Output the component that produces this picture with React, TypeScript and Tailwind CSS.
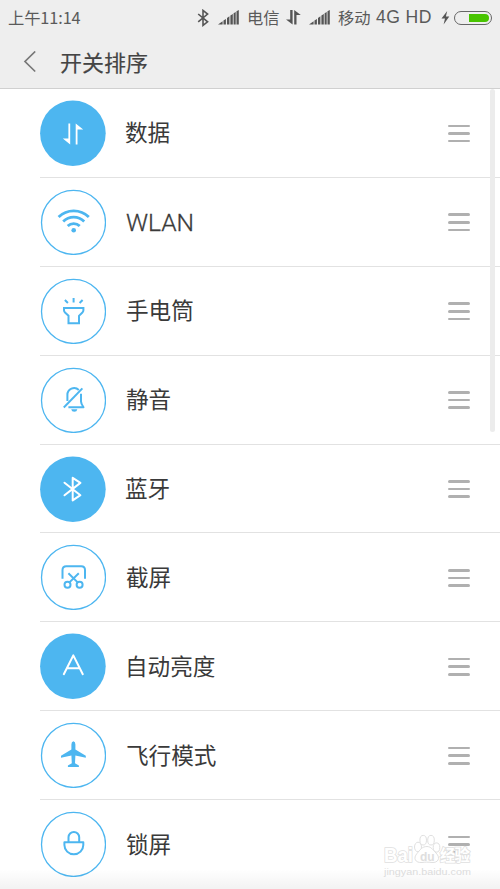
import type { ReactNode } from 'react'

const DataIcon = () => (
  <g fill="currentColor">
    <path d="M28.4 23.6H30.2V44.4L22.8 38.6H28.4Z" />
    <path d="M35.7 44.4V23.6L43.2 29.4H37.5V44.4Z" />
  </g>
)

const WlanIcon = () => (
  <>
    <g strokeWidth="2.8" strokeLinecap="butt">
      <path d="M18.6 28A21.5 21.5 0 0 1 48.8 28" />
      <path d="M23.2 32.5A15 15 0 0 1 44.2 32.5" />
      <path d="M27.7 37A8.6 8.6 0 0 1 39.7 37" />
    </g>
    <circle cx="33.7" cy="41.2" r="2.3" fill="currentColor" stroke="none" />
  </>
)

const TorchIcon = () => (
  <g strokeWidth="2" strokeLinecap="butt" strokeLinejoin="miter">
    <path d="M24 30H43.4V32.3Q43.4 33.6 42.4 34.5L39 37.8V45.2H28.5V37.8L25 34.5Q24 33.6 24 32.3Z" />
    <path d="M33.6 19.9V24.6M24.9 22L27.9 25M42.6 22L39.6 25" />
  </g>
)

const MuteIcon = () => (
  <g strokeWidth="2" strokeLinecap="butt">
    <path d="M23.8 40.5L42.4 21.4" />
    <path d="M27.4 34V28A6.7 6.7 0 0 1 38.8 23" />
    <path d="M41 26.8V34.5Q41 36.6 43.5 40.2H28.4" />
    <path d="M31.2 42.2H37.4Q36.9 44.8 34.3 44.8T31.2 42.2Z" fill="currentColor" stroke="none" />
  </g>
)

const BluetoothIcon = () => (
  <path d="M24.5 26.7L40.4 39.2L32.7 44.4V21.8L40.4 26.9L24.5 39.3" strokeWidth="2" />
)

const ScreenshotIcon = () => (
  <g strokeWidth="2" strokeLinecap="butt">
    <path d="M22.5 34.8V26Q22.5 22.2 26.3 22.2H41.2Q45 22.2 45 26V34.8" />
    <path d="M28.4 29.2L37.7 38.4M38.8 29.2L29.4 38.4" />
    <circle cx="27.5" cy="40.7" r="3" />
    <circle cx="39.6" cy="40.7" r="3" />
  </g>
)

const AutoIcon = () => (
  <path d="M23.8 41.2L33.3 22.4L42.8 41.2M26.9 35.3H39.7" strokeWidth="2" />
)

const PlaneIcon = () => (
  <path
    d="M33.4 19.2Q35.4 19.8 35.4 22.5V27.5L45.8 33.8V35.8L35.4 33.4L35 41.3L38.9 43.6V45H27.9V43.6L31.8 41.3L31.4 33.4L21 35.8V33.8L31.4 27.5V22.5Q31.4 19.8 33.4 19.2Z"
    fill="currentColor"
    stroke="none"
  />
)

const LockIcon = () => (
  <g strokeWidth="2">
    <path d="M28.5 31V26.3A5.3 5.3 0 0 1 39.2 26.3V31" />
    <path d="M24.4 31.2H43.3V34A9.4 9.3 0 0 1 24.4 34Z" />
  </g>
)

const toggles: { label: string; icon: ReactNode; on?: boolean }[] = [
  { label: '数据', icon: <DataIcon />, on: true },
  { label: 'WLAN', icon: <WlanIcon /> },
  { label: '手电筒', icon: <TorchIcon /> },
  { label: '静音', icon: <MuteIcon /> },
  { label: '蓝牙', icon: <BluetoothIcon />, on: true },
  { label: '截屏', icon: <ScreenshotIcon /> },
  { label: '自动亮度', icon: <AutoIcon />, on: true },
  { label: '飞行模式', icon: <PlaneIcon /> },
  { label: '锁屏', icon: <LockIcon /> },
]

function Signal() {
  return (
    <svg className="h-[15px] w-[21px] shrink-0" viewBox="0 0 21 15" fill="#555">
      <path d="M0 14.4L4.6 11.2V14.4ZM5.5 10.5L7.9 8.9V14.4H5.5ZM9 8L11.4 6.3V14.4H9ZM12.4 5.6L14.8 3.9V14.4H12.4ZM15.6 3.3L17.7 1.9V14.4H15.6ZM18.5 1.2L20.8 0V14.4H18.5Z" />
    </svg>
  )
}

function StatusBar() {
  return (
    <div className="flex h-[35px] items-center pl-[8px] text-[16.3px] leading-none whitespace-nowrap text-[#5a5a5a]">
      <span className="w-[189px] tracking-[-0.1px]">上午11:14</span>
      <svg className="h-[18px] w-[12px] shrink-0" viewBox="0 0 12 18" fill="none" stroke="#555" strokeWidth="1.6">
        <path d="M1.2 5L10.6 12.8L6 16.4V1.4L10.6 5L1.2 12.8" />
      </svg>
      <div className="ml-[9px] flex">
        <Signal />
      </div>
      <span className="ml-[8px] w-[32px]">电信</span>
      <svg className="ml-[7px] h-[15px] w-[15px] shrink-0" viewBox="0 0 15 15" fill="#555">
        <path d="M4.2 0H6.6V14.5L0 9.5H4.2ZM8.2 14.5V0L14.8 5H10.5V14.5Z" />
      </svg>
      <div className="ml-[8px] flex">
        <Signal />
      </div>
      <span className="ml-[8px] w-[32px]">移动</span>
      <span className="ml-[6px] w-[57px] pt-px font-['Liberation_Sans',sans-serif] text-[17.6px] tracking-[0.4px]">
        4G HD
      </span>
      <svg className="ml-[8px] h-[14px] w-[9px] shrink-0" viewBox="0 0 9 14" fill="#555">
        <path d="M6.2 0L0.5 7.6H4L2.6 13.4L8.3 5.5H4.9Z" />
      </svg>
      <div className="ml-[4px] flex h-[14px] w-[38px] shrink-0 justify-end rounded-full border border-[#666] p-[2px]">
        <div className="h-full w-[20px] rounded-r-full bg-[#48c400]" />
      </div>
    </div>
  )
}

function Handle() {
  return (
    <div className="mr-[30px] ml-auto flex w-[22px] flex-col gap-[5px] pt-px">
      <div className="h-[2.6px] rounded-sm bg-[#b0b0b0]" />
      <div className="h-[2.6px] rounded-sm bg-[#b0b0b0]" />
      <div className="h-[2.6px] rounded-sm bg-[#b0b0b0]" />
    </div>
  )
}

function Watermark() {
  return (
    <svg
      className="absolute bottom-[8px] left-[380px] h-[50px] w-[96px] font-['Liberation_Sans','Noto_Sans_CJK_SC',sans-serif]"
      viewBox="0 0 96 50"
      fill="#fff"
      stroke="#e0e0e0"
      strokeWidth="1"
    >
      <g strokeWidth="1.6" paintOrder="stroke">
        <text x="4" y="30.5" fontSize="20" fontWeight="700" textLength="29" lengthAdjust="spacingAndGlyphs">Bai</text>
        <text x="60" y="30" fontSize="15.5" fontWeight="700" textLength="30">经验</text>
      </g>
      <text x="4" y="43.5" fontSize="9" textLength="87" lengthAdjust="spacingAndGlyphs" fill="#dcdcdc" stroke="none">
        jingyan.baidu.com
      </text>
      <ellipse cx="38" cy="16" rx="3.5" ry="4.8" />
      <ellipse cx="43.2" cy="9.2" rx="3.3" ry="4.8" />
      <ellipse cx="51" cy="9.2" rx="3.3" ry="4.8" />
      <ellipse cx="56.5" cy="16.5" rx="3.3" ry="4.6" />
      <path d="M47 15.5C51 15.5 53 19 56 22C61 27 58 32 52 31.5C48 31 45 31 42 31.5C35 32 33 27 37 22.5C40 19 42 15.5 47 15.5Z" />
      <text x="40" y="29.5" fontSize="12" fontWeight="700" fill="#dedede" stroke="none">du</text>
    </svg>
  )
}

export default function App() {
  return (
    <main className="relative flex h-[889px] w-[500px] flex-col overflow-hidden bg-white font-['Noto_Sans_CJK_SC',sans-serif]">
      <header className="h-[89px] shrink-0 border-b border-[#d0d0d0] bg-[#eee]">
        <StatusBar />
        <div className="flex h-[53px] items-center pl-[23px]">
          <svg className="h-[22px] w-[14px]" viewBox="0 0 14 22" fill="none" stroke="#777" strokeWidth="1.7">
            <path d="M12.2 0.5L2 10.5L12.2 20.5" />
          </svg>
          <h1 className="ml-[23px] pb-px text-[22px] leading-none font-normal text-[#444] [-webkit-text-stroke:0.15px_#444]">
            开关排序
          </h1>
        </div>
      </header>

      <ul className="shrink-0">
        {toggles.map(({ label, icon, on }) => (
          <li
            key={label}
            className="ml-[40px] flex h-[88.9px] items-center border-b border-[#e2e2e2] last:border-transparent"
          >
            <svg
              className={on ? 'h-[66px] w-[66px] text-white' : 'h-[66px] w-[66px] text-[#4db6f0]'}
              viewBox="0 0 66 66"
              fill="none"
              stroke="none"
            >
              {on ? (
                <circle cx="32.9" cy="33.2" r="32.8" fill="#4db6f0" />
              ) : (
                <circle cx="33.5" cy="33.4" r="32" stroke="#4db6f0" strokeWidth="1.3" />
              )}
              <g stroke={label === '数据' ? 'none' : 'currentColor'} strokeLinecap="round" strokeLinejoin="round">
                {icon}
              </g>
            </svg>
            <span
              className={
                label === 'WLAN'
                  ? "ml-[20px] pt-[2px] font-['Roboto',sans-serif] text-[24.6px] leading-none font-light text-[#3a3a3a] [-webkit-text-stroke:0.3px_#3a3a3a]"
                  : on
                    ? 'ml-[19px] pb-[0.5px] text-[22.6px] leading-none text-[#3a3a3a]'
                    : 'ml-[20px] pb-[0.5px] text-[22.6px] leading-none text-[#3a3a3a]'
              }
            >
              {label}
            </span>
            <Handle />
          </li>
        ))}
      </ul>

      <div className="absolute top-[89px] right-[5px] h-[343px] w-[5px] rounded-full bg-[#ececec]" />
      <div className="absolute bottom-0 left-0 h-[20px] w-full bg-gradient-to-b from-transparent to-black/5" />
      <Watermark />
    </main>
  )
}
